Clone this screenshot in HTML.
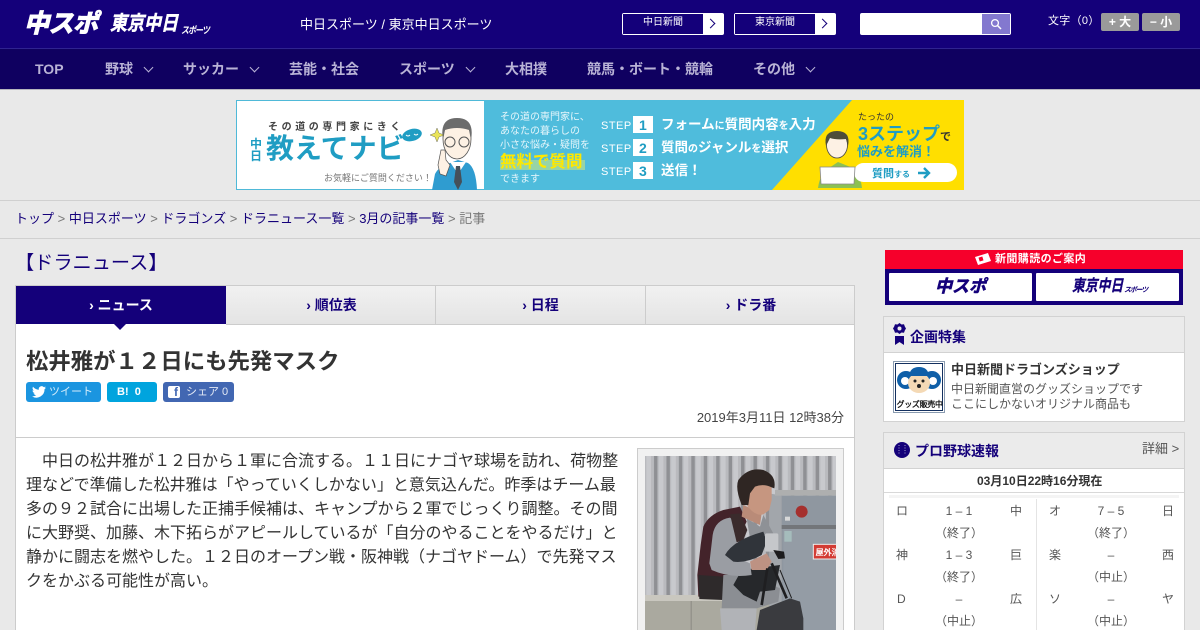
<!DOCTYPE html>
<html lang="ja">
<head>
<meta charset="utf-8">
<title>松井雅が１２日にも先発マスク</title>
<style>
html,body{margin:0;padding:0;width:1200px;height:630px;overflow:hidden}
body{background:#e9e9e9}
#w{position:absolute;left:0;top:0;width:1200px;height:630px;overflow:hidden;background:#e9e9e9;font-family:"Liberation Sans","WenQuanYi Zen Hei","Noto Sans CJK JP",sans-serif;color:#333}
.a{position:absolute;white-space:nowrap}
.box{position:absolute;box-sizing:border-box}
.nav{color:#b9b3d6;font-size:14px;font-weight:bold;top:60px;line-height:18px}
.chev{position:absolute;width:6px;height:6px;border-right:1.3px solid #b9b3d6;border-bottom:1.3px solid #b9b3d6;transform:rotate(45deg);top:64px}
.logo{font-weight:bold;font-style:italic;color:#fff;transform-origin:0 50%}
.tab{position:absolute;top:286px;height:38px;line-height:38px;text-align:center;font-size:14px;font-weight:bold;color:#14007a;box-sizing:border-box;background:linear-gradient(#f1f1f1,#e4e4e4);border-right:1px solid #ccc}
.bc{font-size:13px;top:210px;line-height:18px;color:#777}
.bc b{font-weight:normal;color:#14007a}
.art{left:26px;font-size:16px;line-height:24px;color:#333}
.sc{position:absolute;font-size:12px;line-height:16px;color:#555;text-align:center;white-space:nowrap}
</style>
</head>
<body>
<div id="w">

<!-- header -->
<div class="box" style="left:0;top:0;width:1200px;height:48px;background:#14007a"></div>
<div class="box" style="left:0;top:48px;width:1200px;height:41px;background:#0f0060;border-top:1px solid #2f2390"></div>
<div class="box" style="left:0;top:89px;width:1200px;height:1px;background:#b5b5bd"></div>

<div class="a logo" style="left:24px;top:6px;font-size:25px;line-height:36px;letter-spacing:-.5px;-webkit-text-stroke:1.2px #fff">中スポ</div>
<div class="a logo" style="left:110px;top:9px;font-size:20px;line-height:30px;-webkit-text-stroke:.5px #fff;transform:scaleX(.85)">東京中日</div>
<div class="a logo" style="left:181px;top:24px;font-size:8px;line-height:14px;letter-spacing:-1px;transform:scaleY(1.2)">スポーツ</div>
<div class="a" style="left:300px;top:15px;font-size:13px;line-height:20px;color:#fff">中日スポーツ / 東京中日スポーツ</div>

<!-- newspaper buttons -->
<div class="box" style="left:622px;top:13px;width:102px;height:22px;background:#fff;border-radius:2px"></div>
<div class="box" style="left:623px;top:14px;width:80px;height:20px;background:#14007a;color:#fff;font-size:10px;line-height:18px;text-align:center">中日新聞</div>
<div class="box" style="left:707px;top:20px;width:7px;height:7px;border-top:1.2px solid #14007a;border-right:1.2px solid #14007a;transform:rotate(45deg)"></div>
<div class="box" style="left:734px;top:13px;width:102px;height:22px;background:#fff;border-radius:2px"></div>
<div class="box" style="left:735px;top:14px;width:80px;height:20px;background:#14007a;color:#fff;font-size:10px;line-height:18px;text-align:center">東京新聞</div>
<div class="box" style="left:819px;top:20px;width:7px;height:7px;border-top:1.2px solid #14007a;border-right:1.2px solid #14007a;transform:rotate(45deg)"></div>

<!-- search -->
<div class="box" style="left:860px;top:13px;width:151px;height:22px;background:#fff;border-radius:2px"></div>
<div class="box" style="left:982px;top:14px;width:28px;height:20px;background:#8378cf"></div>
<svg class="a" style="left:990px;top:18px" width="12" height="12" viewBox="0 0 12 12"><circle cx="5" cy="5" r="3.4" fill="none" stroke="#fff" stroke-width="1.3"/><path d="M7.500 7.500L11 11" stroke="#fff" stroke-width="1.500"/></svg>

<!-- font size -->
<div class="a" style="left:1048px;top:13px;font-size:11px;line-height:16px;color:#fff;letter-spacing:.3px">文字（0）</div>
<div class="box" style="left:1101px;top:13px;width:38px;height:18px;background:#9a9a9a;border-radius:2px;color:#fff;font-size:12px;font-weight:bold;line-height:18px;text-align:center">+ 大</div>
<div class="box" style="left:1142px;top:13px;width:38px;height:18px;background:#9a9a9a;border-radius:2px;color:#fff;font-size:12px;font-weight:bold;line-height:18px;text-align:center">− 小</div>

<!-- nav -->
<div class="a nav" style="left:35px">TOP</div>
<div class="a nav" style="left:105px">野球</div><div class="chev" style="left:145px"></div>
<div class="a nav" style="left:183px">サッカー</div><div class="chev" style="left:251px"></div>
<div class="a nav" style="left:289px">芸能・社会</div>
<div class="a nav" style="left:399px">スポーツ</div><div class="chev" style="left:467px"></div>
<div class="a nav" style="left:505px">大相撲</div>
<div class="a nav" style="left:587px">競馬・ボート・競輪</div>
<div class="a nav" style="left:753px">その他</div><div class="chev" style="left:807px"></div>

<!-- banner -->
<div class="box" style="left:236px;top:100px;width:728px;height:90px;background:#fff;border:1px solid #4fb9d8"></div>
<svg class="a" style="left:236px;top:100px" width="728" height="90" viewBox="0 0 728 90">
<rect x="248" y="0" width="480" height="90" fill="#4fbcdc"/>
<polygon points="616,0 728,0 728,90 536,90" fill="#ffdf00"/>
<!-- man left -->
<path d="M196 90 L199 74 Q203 66 214 63 L222 60 L232 63 Q240 68 241 90Z" fill="#2f9cd0"/>
<path d="M214 62 L222 74 L230 62Z" fill="#fff"/>
<path d="M220 66h4l2 16-4 8-4-8z" fill="#45505a"/>
<ellipse cx="221" cy="39" rx="14" ry="20" fill="#fdf1e4" stroke="#555" stroke-width=".8"/>
<path d="M207 40 Q203 18 221 18 Q239 18 235 40 L233 30 Q221 26 209 30Z" fill="#6c6c6c"/>
<circle cx="214" cy="42" r="5" fill="none" stroke="#555"/><circle cx="228" cy="42" r="5" fill="none" stroke="#555"/>
<path d="M202 65 L205 50 L209 50 L210 60 L214 65 L210 76 L204 74Z" fill="#fdf1e4" stroke="#555" stroke-width=".7"/>
<polygon points="201,28 203,33 208,35 203,37 201,42 199,37 194,35 199,33" fill="#e9e35a" stroke="#555" stroke-width=".4"/>
<ellipse cx="176" cy="35" rx="10" ry="6" fill="#1f9dc3" transform="rotate(-15 176 35)"/>
<path d="M170 35q2 2 4 0M178 34q2 2 4 0" stroke="#fff" fill="none" stroke-width=".9"/>
<!-- man right -->
<path d="M582 88 Q584 72 596 66 L602 62 L612 66 Q624 70 626 88Z" fill="#8cc152"/>
<ellipse cx="601" cy="45" rx="10.500" ry="13" fill="#fdf1e4" stroke="#444" stroke-width=".8"/>
<path d="M590 46 Q587 31 601 31 Q615 31 612 46 L610 39 Q600 40 594 38Z" fill="#4d4d3a"/>
<rect x="618" y="63" width="103" height="19" rx="9.500" fill="#fff"/>
<path d="M584 67h35l-1 17h-33z" fill="#fff" stroke="#888" stroke-width=".8"/>
<path d="M682 73h11M688 68l5 5-5 5" stroke="#1f9dc3" stroke-width="2.400" fill="none"/>
<!-- step numbers -->
<rect x="397" y="16" width="20" height="17" fill="#fff"/><rect x="397" y="39" width="20" height="17" fill="#fff"/><rect x="397" y="62" width="20" height="17" fill="#fff"/>
<g font-family="Liberation Sans,WenQuanYi Zen Hei,Noto Sans CJK JP,sans-serif">
<text x="32" y="30" font-size="10" font-weight="bold" fill="#444" letter-spacing="3.600">その道の専門家にきく</text>
<text x="14" y="48" font-size="12" font-weight="bold" fill="#1f9dc3">中</text>
<text x="14" y="60" font-size="12" font-weight="bold" fill="#1f9dc3">日</text>
<text x="30" y="58" font-size="28" font-weight="bold" fill="#1f9dc3">教えてナビ</text>
<text x="88" y="81" font-size="9" fill="#777">お気軽にご質問ください！</text>
<text x="264" y="20" font-size="10" fill="#e6f6fb">その道の専門家に、</text>
<text x="264" y="34" font-size="10" fill="#e6f6fb">あなたの暮らしの</text>
<text x="264" y="48" font-size="10" fill="#e6f6fb">小さな悩み・疑問を</text>
<rect x="264" y="60" width="85" height="10" fill="#a9d99a" opacity=".8"/>
<text x="264" y="67" font-size="16.500" font-weight="bold" fill="#ffe800">無料で質問</text>
<text x="264" y="82" font-size="10" fill="#e6f6fb">できます</text>
<text x="365" y="29" font-size="11" fill="#fff" letter-spacing=".5">STEP</text>
<text x="365" y="52" font-size="11" fill="#fff" letter-spacing=".5">STEP</text>
<text x="365" y="75" font-size="11" fill="#fff" letter-spacing=".5">STEP</text>
<text x="403" y="30" font-size="14" fill="#1f9dc3" font-weight="bold">1</text>
<text x="403" y="53" font-size="14" fill="#1f9dc3" font-weight="bold">2</text>
<text x="403" y="76" font-size="14" fill="#1f9dc3" font-weight="bold">3</text>
<text x="425" y="29" font-size="13.500" fill="#fff" font-weight="bold">フォーム<tspan font-size="10">に</tspan>質問内容<tspan font-size="10">を</tspan>入力</text>
<text x="425" y="52" font-size="13.500" fill="#fff" font-weight="bold">質問<tspan font-size="10">の</tspan>ジャンル<tspan font-size="10">を</tspan>選択</text>
<text x="425" y="75" font-size="13.500" fill="#fff" font-weight="bold">送信！</text>
<text x="622" y="20" font-size="9" fill="#333">たったの</text>
<text x="622" y="40" font-size="18" font-weight="bold" fill="#1f9dc3">3ステップ<tspan font-size="11" fill="#333">で</tspan></text>
<text x="621" y="56" font-size="13" font-weight="bold" fill="#1f9dc3">悩みを解消！</text>
<text x="636" y="77" font-size="11" font-weight="bold" fill="#1f9dc3">質問<tspan font-size="8">する</tspan></text>
</g>
</svg>

<!-- breadcrumb -->
<div class="box" style="left:0;top:200px;width:1200px;height:39px;border-top:1px solid #d0d0d0;border-bottom:1px solid #d0d0d0"></div>
<div class="a bc" style="left:15px"><b>トップ</b> &gt; <b>中日スポーツ</b> &gt; <b>ドラゴンズ</b> &gt; <b>ドラニュース一覧</b> &gt; <b>3月の記事一覧</b> &gt; 記事</div>

<div class="a" style="left:15px;top:250px;font-size:19.200px;line-height:28px;color:#14007a">【ドラニュース】</div>

<!-- main card -->
<div class="box" style="left:15px;top:285px;width:840px;height:360px;background:#fff;border:1px solid #ccc"></div>
<div class="tab" style="left:16px;width:210px;background:#14007a;color:#fff;border-right:0">› ニュース</div>
<div class="box" style="left:114px;top:324px;width:0;height:0;border-left:6px solid transparent;border-right:6px solid transparent;border-top:6px solid #14007a"></div>
<div class="tab" style="left:226px;width:210px;padding-left:2px">› 順位表</div>
<div class="tab" style="left:436px;width:210px">› 日程</div>
<div class="tab" style="left:646px;width:208px;border-right:0;padding-left:2px">› ドラ番</div>
<div class="box" style="left:226px;top:324px;width:628px;height:1px;background:#ccc"></div>

<div class="a" style="left:26px;top:346px;font-size:22.400px;line-height:32px;font-weight:bold;color:#333">松井雅が１２日にも先発マスク</div>

<!-- social -->
<div class="box" style="left:26px;top:382px;width:75px;height:20px;background:#1b95e0;border-radius:3px"></div>
<svg class="a" style="left:32px;top:386px" width="14" height="12" viewBox="0 0 24 20"><path d="M24 2.400a10 10 0 0 1-2.800.8A5 5 0 0 0 23.300.5a10 10 0 0 1-3.100 1.200 4.900 4.900 0 0 0-8.400 4.500A14 14 0 0 1 1.700 1a4.900 4.900 0 0 0 1.500 6.600 5 5 0 0 1-2.200-.6 4.900 4.900 0 0 0 3.900 4.900 5 5 0 0 1-2.200.1 4.900 4.900 0 0 0 4.600 3.400A10 10 0 0 1 0 17.400 14 14 0 0 0 21.500 5a10 10 0 0 0 2.500-2.600z" fill="#fff"/></svg>
<div class="a" style="left:49px;top:384px;font-size:11px;line-height:16px;color:#d5ecfa">ツイート</div>
<div class="box" style="left:107px;top:382px;width:50px;height:20px;background:#00a4de;border-radius:3px;color:#fff;font-size:11px;font-weight:bold;line-height:20px;padding-left:10px">B!&nbsp;&nbsp;0</div>
<div class="box" style="left:163px;top:382px;width:71px;height:20px;background:#4267b2;border-radius:3px"></div>
<div class="box" style="left:168px;top:386px;width:12px;height:12px;background:#fff;border-radius:2px"></div>
<div class="a" style="left:174px;top:385px;font-size:12px;font-weight:bold;line-height:15px;color:#4267b2">f</div>
<div class="a" style="left:186px;top:384px;font-size:11px;line-height:16px;color:#e3e9f5">シェア 0</div>

<div class="a" style="right:356px;top:409px;font-size:13px;line-height:18px;color:#444">2019年3月11日 12時38分</div>
<div class="box" style="left:16px;top:437px;width:838px;height:1px;background:#ccc"></div>

<!-- article -->
<div class="a art" style="top:450px">　中日の松井雅が１２日から１軍に合流する。１１日にナゴヤ球場を訪れ、荷物整</div>
<div class="a art" style="top:474px">理などで準備した松井雅は「やっていくしかない」と意気込んだ。昨季はチーム最</div>
<div class="a art" style="top:498px">多の９２試合に出場した正捕手候補は、キャンプから２軍でじっくり調整。その間</div>
<div class="a art" style="top:522px">に大野奨、加藤、木下拓らがアピールしているが「自分のやることをやるだけ」と</div>
<div class="a art" style="top:546px">静かに闘志を燃やした。１２日のオープン戦・阪神戦（ナゴヤドーム）で先発マス</div>
<div class="a art" style="top:570px">クをかぶる可能性が高い。</div>

<!-- photo -->
<div class="box" style="left:637px;top:448px;width:207px;height:190px;background:#f1f1f1;border:1px solid #ccc"></div>
<svg class="a" style="left:645px;top:456px" width="191" height="174" viewBox="0 0 191 174">
<defs><pattern id="cor" x="15" width="37.300" height="20" patternUnits="userSpaceOnUse"><rect width="37.300" height="20" fill="#b9babe"/><rect x="27" width="11" height="20" fill="#8f9094"/><rect x="4" width="14" height="20" fill="#c8c9cd"/></pattern></defs>
<g transform="translate(-5,-1) scale(.33333)">
<rect x="15" y="0" width="575" height="420" fill="url(#cor)"/>
<rect x="15" y="420" width="575" height="105" fill="#aaa99f"/>
<rect x="15" y="420" width="240" height="18" fill="#c9c7bf"/>
<rect x="152" y="438" width="3" height="87" fill="#8b8a83"/>
<polygon points="388,115 425,122 425,525 388,525" fill="#a2a6ab"/>
<rect x="405" y="105" width="185" height="17" fill="#aeafaf"/>
<rect x="425" y="122" width="165" height="403" fill="#8f97a0"/>
<rect x="425" y="210" width="165" height="12" fill="#73767a"/>
<rect x="430" y="222" width="160" height="303" fill="#949ca5"/>
<circle cx="485" cy="170" r="18" fill="#a5302e"/>
<rect x="435" y="185" width="15" height="12" fill="#d7d8d8"/>
<rect x="433" y="228" width="22" height="32" fill="#a5bcbc"/>
<rect x="520" y="268" width="70" height="44" fill="#d33b33" stroke="#eee" stroke-width="3"/>
<!-- backpack -->
<path d="M175 425 L172 360 L182 270 L190 215 Q205 180 250 165 L300 155 L320 200 L290 260 L250 430Z" fill="#43232a"/>
<path d="M175 360 L250 365 L250 435 L178 432Z" fill="#2e2a2b"/>
<!-- torso -->
<path d="M250 360 L330 360 L420 400 L415 440 L350 460 L245 460Z" fill="#8b8e93"/>
<path d="M240 460 L350 460 L345 525 L245 525Z" fill="#b1b3b7"/>
<path d="M280 390 L305 345 L420 330 L405 405 L360 410 L350 440 L310 420Z" fill="#26282b"/>
<path d="M218 240 Q225 195 270 188 L285 200 L292 260 L265 295 L330 325 L335 360 Q270 370 215 345 L208 325Z" fill="#9a9da3"/>
<path d="M270 178 L300 175 L322 225 L310 255 L290 262Z" fill="#3a2b2c"/>
<path d="M320 190 L360 215 L370 180 L400 235 L330 250Z" fill="#8e9196"/>
<path d="M255 300 Q280 255 370 230 L380 260 L365 300 Q320 325 280 320Z" fill="#30343a"/>
<path d="M330 320 L380 295 L395 320 L380 345 L335 345Z" fill="#bd9283"/>
<rect x="375" y="235" width="40" height="55" rx="5" fill="#c5c7ca"/>
<path d="M400 285 L432 290 L435 310 L415 312Z" fill="#1c1c1e"/>
<!-- head -->
<path d="M310 150 L305 185 L360 210 L365 175Z" fill="#b98b78"/>
<path d="M315 95 L320 150 Q345 185 370 178 L388 165 L395 135 L395 95 L350 85Z" fill="#c69680"/>
<path d="M305 150 Q285 100 295 75 Q325 35 370 45 Q410 60 403 100 L395 97 Q370 85 345 95 L330 115 L325 150Z" fill="#2f2623"/>
<!-- bag -->
<path d="M350 525 L360 465 L450 430 L480 440 L490 490 L490 525Z" fill="#3a3b3f"/>
<path d="M382 340 L365 450M395 325 L440 430" stroke="#1f1f21" stroke-width="8" fill="none"/>
<path d="M420 345 L455 430" stroke="#1f1f21" stroke-width="3" fill="none"/>
<text x="527" y="300" font-size="24" font-weight="bold" fill="#fff" font-family="Liberation Sans,WenQuanYi Zen Hei,sans-serif">屋外消</text>
</g>
</svg>

<!-- subscription -->
<div class="box" style="left:885px;top:250px;width:298px;height:19px;background:#f6002b;color:#fff;font-size:11px;font-weight:bold;line-height:19px;padding-left:110px;letter-spacing:.4px">新聞購読のご案内</div>
<svg class="a" style="left:974px;top:252px" width="18" height="15" viewBox="0 0 18 15"><path d="M1 5L14 1L17 9L4 13Z" fill="#fff"/><rect x="5" y="5" width="4" height="4" fill="#f6002b" transform="rotate(-17 7 7)"/></svg>
<div class="box" style="left:885px;top:269px;width:298px;height:36px;background:#14007a"></div>
<div class="box" style="left:889px;top:273px;width:143px;height:28px;background:#fff;border-radius:1px;color:#14007a;font-size:17px;font-weight:bold;font-style:italic;line-height:28px;text-align:center;-webkit-text-stroke:.6px #14007a">中スポ</div>
<div class="box" style="left:1036px;top:273px;width:143px;height:28px;background:#fff;border-radius:1px"></div>
<div class="a" style="left:1072px;top:274px;color:#14007a;font-size:16px;font-weight:bold;font-style:italic;line-height:26px;transform:scaleX(.8);transform-origin:0 50%;-webkit-text-stroke:.3px #14007a">東京中日</div>
<div class="a" style="left:1124px;top:286px;color:#14007a;font-size:7px;font-weight:bold;font-style:italic;line-height:10px;letter-spacing:-1.200px">スポーツ</div>

<!-- tokushu -->
<div class="box" style="left:883px;top:316px;width:302px;height:106px;background:#fff;border:1px solid #d2d2d2"></div>
<div class="box" style="left:884px;top:317px;width:300px;height:36px;background:#ebebeb;border-bottom:1px solid #d2d2d2"></div>
<svg class="a" style="left:893px;top:323px" width="13" height="22" viewBox="0 0 13 22"><path d="M6.500 0l2 1.500 2.500-.3.800 2.300 1.200 2-1.200 2-.8 2.300-2.500-.3-2 1.500-2-1.500-2.500.3-.8-2.300L0 5.500l1.200-2 .8-2.300 2.500.3z" fill="#14007a"/><circle cx="6.500" cy="5.500" r="2" fill="#e9e9e9"/><path d="M2 13h9v9l-4.500-3L2 22z" fill="#14007a"/></svg>
<div class="a" style="left:910px;top:327px;font-size:14px;font-weight:bold;line-height:20px;color:#14007a">企画特集</div>
<div class="box" style="left:893px;top:361px;width:52px;height:52px;background:#fff;border:1px solid #8a9bb0"></div>
<svg class="a" style="left:895px;top:363px" width="48" height="48" viewBox="0 0 48 48">
<rect x=".5" y=".5" width="47" height="47" fill="#fff" stroke="#14305f"/>
<circle cx="11" cy="17" r="9" fill="#0f5fa8"/><circle cx="37" cy="17" r="9" fill="#0f5fa8"/>
<circle cx="10" cy="18" r="4" fill="#fff"/><circle cx="38" cy="18" r="4" fill="#fff"/>
<ellipse cx="24" cy="20" rx="11" ry="10" fill="#f4d9b5"/>
<path d="M14 13 Q15 4 24 4 Q33 4 34 13Z" fill="#0f5fa8"/>
<circle cx="20" cy="18" r="1.500" fill="#222"/><circle cx="28" cy="18" r="1.500" fill="#222"/><circle cx="24" cy="23" r="2" fill="#222"/>
<text x="1.500" y="44" font-size="8" font-weight="bold" fill="#111" font-family="Liberation Sans,WenQuanYi Zen Hei,sans-serif" letter-spacing="-.3">グッズ販売中</text>
</svg>
<div class="a" style="left:951px;top:361px;font-size:13px;font-weight:bold;line-height:18px;color:#333">中日新聞ドラゴンズショップ</div>
<div class="a" style="left:951px;top:381px;font-size:12px;line-height:16px;color:#555">中日新聞直営のグッズショップです</div>
<div class="a" style="left:951px;top:396px;font-size:12px;line-height:16px;color:#555">ここにしかないオリジナル商品も</div>

<!-- pro baseball -->
<div class="box" style="left:883px;top:432px;width:302px;height:210px;background:#fff;border:1px solid #d2d2d2"></div>
<div class="box" style="left:884px;top:433px;width:300px;height:36px;background:#ebebeb;border-bottom:1px solid #d2d2d2"></div>
<svg class="a" style="left:894px;top:442px" width="16" height="16" viewBox="0 0 16 16"><circle cx="8" cy="8" r="8" fill="#14007a"/><path d="M5 3v10M11 3v10" stroke="#c9c9e0" stroke-width=".8" stroke-dasharray="1 1.500"/></svg>
<div class="a" style="left:915px;top:441px;font-size:14px;font-weight:bold;line-height:20px;color:#14007a">プロ野球速報</div>
<div class="a" style="left:1142px;top:440px;font-size:13px;line-height:18px;color:#555">詳細 &gt;</div>
<div class="a" style="left:977px;top:472px;font-size:12px;font-weight:bold;line-height:18px;color:#333">03月10日22時16分現在</div>
<div class="box" style="left:884px;top:492px;width:300px;height:1px;background:#d8d8d8"></div>
<div class="box" style="left:889px;top:495px;width:290px;height:3px;background:#f4f4f4"></div>
<div class="box" style="left:1036px;top:499px;width:1px;height:131px;background:#e4e4e4"></div>

<div class="sc" style="left:896px;top:503px">ロ</div><div class="sc" style="left:920px;width:78px;top:503px">1 – 1</div><div class="sc" style="left:1010px;top:503px">中</div>
<div class="sc" style="left:920px;width:78px;top:525px">（終了）</div>
<div class="sc" style="left:896px;top:547px">神</div><div class="sc" style="left:920px;width:78px;top:547px">1 – 3</div><div class="sc" style="left:1010px;top:547px">巨</div>
<div class="sc" style="left:920px;width:78px;top:569px">（終了）</div>
<div class="sc" style="left:897px;top:591px">D</div><div class="sc" style="left:920px;width:78px;top:591px">–</div><div class="sc" style="left:1010px;top:591px">広</div>
<div class="sc" style="left:920px;width:78px;top:613px">（中止）</div>

<div class="sc" style="left:1049px;top:503px">オ</div><div class="sc" style="left:1072px;width:78px;top:503px">7 – 5</div><div class="sc" style="left:1162px;top:503px">日</div>
<div class="sc" style="left:1072px;width:78px;top:525px">（終了）</div>
<div class="sc" style="left:1049px;top:547px">楽</div><div class="sc" style="left:1072px;width:78px;top:547px">–</div><div class="sc" style="left:1162px;top:547px">西</div>
<div class="sc" style="left:1072px;width:78px;top:569px">（中止）</div>
<div class="sc" style="left:1049px;top:591px">ソ</div><div class="sc" style="left:1072px;width:78px;top:591px">–</div><div class="sc" style="left:1162px;top:591px">ヤ</div>
<div class="sc" style="left:1072px;width:78px;top:613px">（中止）</div>

</div>
</body>
</html>
